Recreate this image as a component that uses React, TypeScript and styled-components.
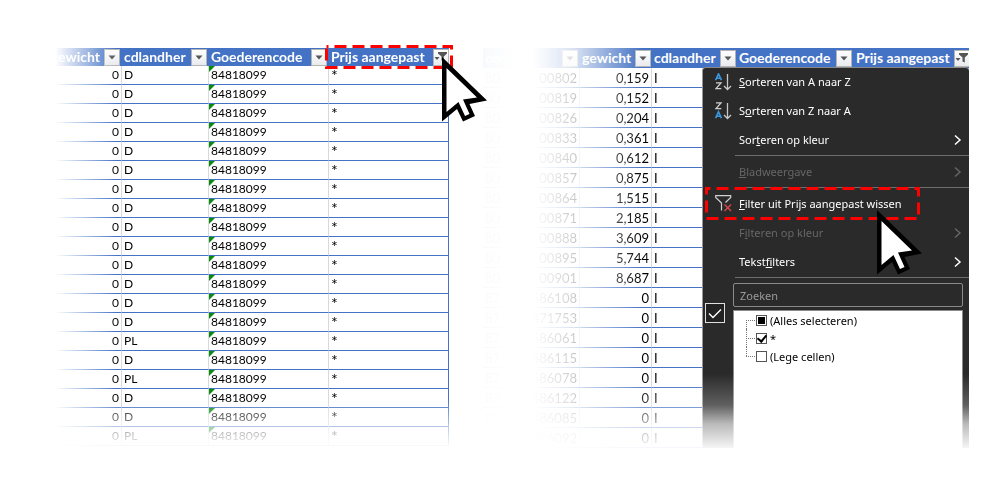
import React from "react";
import styled, { createGlobalStyle, css } from "styled-components";

const Global = createGlobalStyle`
  * { box-sizing: border-box; }
  body { margin: 0; background: #fff; font-family: Lato, "Liberation Sans", sans-serif; }
`;

const blue = "#4472c4";

const Page = styled.main`
  display: grid;
  grid-template-columns: 394fr 486fr;
  column-gap: 34px;
  align-items: start;
  padding: 48px 31px 24px 55px;
`;

const Panel = styled.section`
  position: relative;
`;

const Fade = styled.div<{ $side: string; $bottom: string }>`
  mask-image: linear-gradient(to right, ${(p) => p.$side}), linear-gradient(to bottom, ${(p) => p.$bottom});
  mask-composite: intersect;
`;

const BottomFade = styled.div<{ $bottom: string }>`
  mask-image: linear-gradient(to bottom, ${(p) => p.$bottom});
`;

const Sheet = styled.table<{ $row: number; $size: number }>`
  width: 100%;
  table-layout: fixed;
  border-collapse: separate;
  border-spacing: 0;
  font-size: ${(p) => p.$size}px;
  line-height: 16px;
  color: #000;

  tr {
    height: ${(p) => p.$row}px;
  }
  thead tr {
    height: ${(p) => p.$row - (p.$row === 19 ? 1 : 0)}px;
  }
`;

const Col = styled.col<{ $width?: number }>`
  width: ${(p) => (p.$width ? `${p.$width}px` : "auto")};
`;

const Head = styled.th<{ $active?: boolean }>`
  padding: 0 ${(p) => (p.$active ? 0 : 2)}px 0 2px;
  background: ${blue};
  color: #fff;
  font-size: 14px;
  font-weight: 700;
  text-align: left;
  white-space: nowrap;
`;

const HeadInner = styled.div<{ $end?: boolean }>`
  display: flex;
  align-items: center;
  justify-content: ${(p) => (p.$end ? "flex-end" : "space-between")};
  gap: 4px;
`;

const FilterButton = styled.button`
  display: flex;
  align-items: center;
  justify-content: center;
  flex: none;
  width: 16px;
  height: 17px;
  padding: 0;
  border: 1px solid #b4b4b4;
  background: linear-gradient(#fff, #e8eaee);
`;

const Cell = styled.td<{ $align?: "right"; $last?: boolean }>`
  position: relative;
  padding: 0 2px;
  border-bottom: 1px solid ${blue};
  border-right: 1px solid ${(p) => (p.$last ? blue : "#d6d9de")};
  text-align: ${(p) => p.$align ?? "left"};
  white-space: nowrap;
`;

const Star = styled.span`
  display: block;
  font-size: 16px;
  line-height: 18px;
`;

const Flag = styled.span`
  position: absolute;
  top: 0;
  left: 0;
  border-top: 6px solid #0b8a0b;
  border-right: 6px solid transparent;
`;

const Split = styled.span`
  display: flex;
  justify-content: space-between;
`;

const Faint = styled.span`
  opacity: 0.6;
`;

const Overlay = styled.div<{ $top: number; $right: number }>`
  position: absolute;
  top: ${(p) => p.$top}px;
  right: ${(p) => p.$right}px;
  line-height: 0;
  pointer-events: none;
`;

const Menu = styled.div`
  position: absolute;
  top: 19px;
  right: 0;
  width: 267px;
  border-left: 1px solid #969696;
  border-top: 1px solid #8a8a8a;
  border-radius: 4px 4px 0 0;
  background: #2a2a2a;
  font-family: "Noto Sans", "Open Sans", sans-serif;
  font-size: 11px;
`;

const Item = styled.button`
  display: grid;
  grid-template-columns: 36px 1fr 16px;
  align-items: center;
  width: 100%;
  height: 29px;
  padding: 0 0 2px;
  border: 0;
  background: none;
  color: #fff;
  font: inherit;
  text-align: left;
  white-space: nowrap;

  &:disabled {
    color: #666;
  }
`;

const IconSlot = styled.span`
  display: flex;
  justify-content: flex-end;
  padding-right: 7px;
`;

const Rule = styled.hr`
  height: 1px;
  margin: 0 0 2px 32px;
  border: 0;
  background: #6e6e6e;
`;

const FilterBody = styled.div`
  display: grid;
  grid-template-columns: 30px 1fr;
  padding: 3px 6px 0 0;
`;

const Gutter = styled.div`
  padding: 20px 0 0 2px;
`;

const CheckFrame = styled.div`
  display: flex;
  align-items: center;
  justify-content: center;
  width: 20px;
  height: 20px;
  border: 1px solid #e0e0e0;
  background: #222;
`;

const Search = styled.input`
  display: block;
  width: 100%;
  height: 24px;
  padding: 0 6px;
  border: 1px solid #8a8a8a;
  border-radius: 2px;
  background: #2a2a2a;
  color: #fff;
  font: inherit;

  &::placeholder {
    color: #9a9a9a;
    opacity: 1;
  }
`;

const Options = styled.div`
  height: 152px;
  margin-top: 3px;
  padding-left: 12px;
  border: 1px solid #8a8a8a;
  border-bottom: 0;
  background: #fff;
`;

const Option = styled.label<{ $first?: boolean; $last?: boolean }>`
  position: relative;
  display: flex;
  align-items: center;
  gap: 3px;
  height: 18px;
  padding-left: 10px;
  color: #000;
  white-space: nowrap;

  &::before {
    content: "";
    position: absolute;
    left: 0;
    top: ${(p) => (p.$first ? "9px" : "0")};
    height: ${(p) => (p.$first || p.$last ? "9px" : "18px")};
    border-left: 1px dotted #777;
  }
  &::after {
    content: "";
    position: absolute;
    left: 0;
    top: 9px;
    width: 9px;
    border-top: 1px dotted #777;
  }
`;

const mark = css`
  content: "";
  display: block;
`;

const Box = styled.input<{ $partial?: boolean }>`
  appearance: none;
  display: flex;
  align-items: center;
  justify-content: center;
  width: 11px;
  height: 11px;
  margin: 0;
  border: 1px solid #555;
  background: #fff;

  &:checked::after {
    ${mark}
    ${(p) =>
      p.$partial
        ? css`
            width: 7px;
            height: 7px;
            background: #000;
          `
        : css`
            width: 4px;
            height: 7px;
            margin-bottom: 2px;
            border: solid #000;
            border-width: 0 2px 2px 0;
            transform: rotate(40deg);
          `}
  }
`;

const Arrow = () => (
  <svg width="8" height="5" viewBox="0 0 8 5" aria-hidden="true">
    <path d="M0.5 0.5h7L4 4.5z" fill="#555" />
  </svg>
);

const ActiveFilter = () => (
  <svg width="14" height="12" viewBox="0 0 14 12" aria-hidden="true">
    <path d="M4 1h9v1.500L9.800 5.500V10.500L7.500 9.500V5.500L4 2.500z" fill="#555" />
    <path d="M0.500 6h5L3 9z" fill="#555" />
  </svg>
);

const Chevron = () => (
  <svg width="9" height="12" viewBox="0 0 9 12" fill="none" stroke="currentColor" strokeWidth="1.5" aria-hidden="true">
    <path d="M2 1.500l5 4.500-5 4.500" />
  </svg>
);

const SortIcon = ({ reverse }: { reverse?: boolean }) => {
  const a = <path d="M0.600 7.200L3.500 0.800 6.400 7.200M1.500 5.200h4" stroke="#3a96dd" strokeWidth="1.600" />;
  const z = <path d="M1 0.800h5L1 6.600h5.300" stroke="#d0d0d0" strokeWidth="1.300" />;
  return (
    <svg width="17" height="18" viewBox="0 0 17 18" fill="none" aria-hidden="true">
      <g>{reverse ? z : a}</g>
      <g transform="translate(0 9)">{reverse ? a : z}</g>
      <path d="M12.500 1v15.500M9 13l3.500 3.500L16 13" stroke="#c8c8c8" strokeWidth="1.300" />
    </svg>
  );
};

const ClearFilter = () => (
  <svg width="17" height="17" viewBox="0 0 17 17" fill="none" aria-hidden="true">
    <path d="M6.500 15.500V8L0.700 2.500V0.700h15v1.800L10.500 7.500" stroke="#d0d0d0" strokeWidth="1.200" />
    <path d="M9.500 9.500l6.500 6.500M16 9.500L9.500 16" stroke="#d9484c" strokeWidth="1.400" />
  </svg>
);

const Tick = () => (
  <svg width="14" height="11" viewBox="0 0 14 11" fill="none" aria-hidden="true">
    <path d="M1 5.500l4 4L13 1.500" stroke="#fff" strokeWidth="1.400" />
  </svg>
);

const Pointer = () => (
  <svg width="46" height="65" viewBox="0 0 46 65" aria-hidden="true">
    <path d="M0 0V64.500L15 52L21 64.500L33 59L27.500 47L45 43.500Z" fill="#000" />
    <path d="M4.500 11V55L16.500 45L23 59L27.500 57L21 42.500L35 40.500Z" fill="#fff" />
  </svg>
);

const Dashes = ({ width, height, offset }: { width: number; height: number; offset: number }) => (
  <svg width={width} height={height} aria-hidden="true">
    <rect
      x="1.500"
      y="1.500"
      width={width - 3}
      height={height - 3}
      fill="none"
      stroke="#f00"
      strokeWidth="3"
      strokeDasharray="12 6"
      strokeDashoffset={offset}
    />
  </svg>
);

const HeadCell = ({ text, active, end }: { text: string; active?: boolean; end?: boolean }) => (
  <Head scope="col" $active={active}>
    <HeadInner $end={end}>
      {text}
      <FilterButton type="button" aria-label={`Filter ${text}`}>
        {active ? <ActiveFilter /> : <Arrow />}
      </FilterButton>
    </HeadInner>
  </Head>
);

const countries = "D D D D D D D D D D D D D D PL D PL D D PL".split(" ");

const weights: [string, string, string][] = [
  ["80", "00802", "0,159"],
  ["80", "00819", "0,152"],
  ["80", "00826", "0,204"],
  ["80", "00833", "0,361"],
  ["80", "00840", "0,612"],
  ["80", "00857", "0,875"],
  ["80", "00864", "1,515"],
  ["80", "00871", "2,185"],
  ["80", "00888", "3,609"],
  ["80", "00895", "5,744"],
  ["80", "00901", "8,687"],
  ["87", "486108", "0"],
  ["87", "471753", "0"],
  ["87", "486061", "0"],
  ["87", "486115", "0"],
  ["87", "486078", "0"],
  ["87", "486122", "0"],
  ["87", "486085", "0"],
  ["87", "486092", "0"],
];

const leftSide = "transparent, rgba(0,0,0,0.5) 32px, #000 62px";
const leftBottom =
  "#000 351px, rgba(0,0,0,0.6) 369px, rgba(0,0,0,0.38) 379px, rgba(0,0,0,0.22) 388px, rgba(0,0,0,0.04) 398px, transparent 408px";
const rightSide =
  "rgba(0,0,0,0.04), rgba(0,0,0,0.02) 16px, transparent 30px, transparent 50px, rgba(0,0,0,0.2) 90px, rgba(0,0,0,0.4) 108px, #000 160px";
const rightBottom =
  "#000 326px, rgba(0,0,0,0.75) 357px, rgba(0,0,0,0.32) 376px, rgba(0,0,0,0.06) 399px, transparent 412px";

export default function App() {
  return (
    <>
      <Global />
      <Page>
        <Panel>
          <Fade $side={leftSide} $bottom={leftBottom}>
            <Sheet $row={19} $size={12}>
              <colgroup>
                <Col />
                <Col $width={87} />
                <Col $width={120} />
                <Col $width={120} />
              </colgroup>
              <thead>
                <tr>
                  <HeadCell text="gewicht" end />
                  <HeadCell text="cdlandher" />
                  <HeadCell text="Goederencode" />
                  <HeadCell text="Prijs aangepast" active />
                </tr>
              </thead>
              <tbody>
                {countries.map((country, i) => (
                  <tr key={i}>
                    <Cell $align="right">0</Cell>
                    <Cell>{country}</Cell>
                    <Cell>
                      <Flag />
                      84818099
                    </Cell>
                    <Cell $last>
                      <Star>*</Star>
                    </Cell>
                  </tr>
                ))}
              </tbody>
            </Sheet>
          </Fade>
          <Overlay $top={-3} $right={-4}>
            <Dashes width={128} height={24} offset={10} />
          </Overlay>
          <Overlay $top={9} $right={-39}>
            <Pointer />
          </Overlay>
        </Panel>

        <Panel>
          <BottomFade $bottom={rightBottom}>
            <Fade $side={rightSide} $bottom="#000, #000">
              <Sheet $row={20} $size={13}>
                <colgroup>
                  <Col />
                  <Col $width={72} />
                  <Col $width={85} />
                  <Col $width={117} />
                  <Col $width={115} />
                </colgroup>
                <thead>
                  <tr>
                    <HeadCell text="code" />
                    <HeadCell text="gewicht" />
                    <HeadCell text="cdlandher" />
                    <HeadCell text="Goederencode" />
                    <HeadCell text="Prijs aangepast" active />
                  </tr>
                </thead>
                <tbody>
                  {weights.map(([start, rest, weight], i) => (
                    <tr key={i}>
                      <Cell>
                        <Split>
                          <Faint>{start}</Faint>
                          <span>{rest}</span>
                        </Split>
                      </Cell>
                      <Cell $align="right">{weight}</Cell>
                      <Cell>I</Cell>
                      <Cell />
                      <Cell />
                    </tr>
                  ))}
                </tbody>
              </Sheet>
            </Fade>
            <Menu>
              <Item type="button">
                <IconSlot><SortIcon /></IconSlot>
                <span><u>S</u>orteren van A naar Z</span>
              </Item>
              <Item type="button">
                <IconSlot><SortIcon reverse /></IconSlot>
                <span>S<u>o</u>rteren van Z naar A</span>
              </Item>
              <Item type="button">
                <IconSlot />
                <span>Sor<u>t</u>eren op kleur</span>
                <Chevron />
              </Item>
              <Rule />
              <Item type="button" disabled>
                <IconSlot />
                <span><u>B</u>ladweergave</span>
                <Chevron />
              </Item>
              <Rule />
              <Item type="button">
                <IconSlot><ClearFilter /></IconSlot>
                <span><u>F</u>ilter uit Prijs aangepast wissen</span>
              </Item>
              <Item type="button" disabled>
                <IconSlot />
                <span>F<u>i</u>lteren op kleur</span>
                <Chevron />
              </Item>
              <Item type="button">
                <IconSlot />
                <span>Tekst<u>f</u>ilters</span>
                <Chevron />
              </Item>
              <Rule />
              <FilterBody>
                <Gutter>
                  <CheckFrame><Tick /></CheckFrame>
                </Gutter>
                <div>
                  <Search type="text" placeholder="Zoeken" aria-label="Zoeken" />
                  <Options>
                    <Option $first>
                      <Box type="checkbox" $partial defaultChecked />
                      (Alles selecteren)
                    </Option>
                    <Option>
                      <Box type="checkbox" defaultChecked />*
                    </Option>
                    <Option $last>
                      <Box type="checkbox" />
                      (Lege cellen)
                    </Option>
                  </Options>
                </div>
              </FilterBody>
            </Menu>
          </BottomFade>
          <Overlay $top={139} $right={49}>
            <Dashes width={215} height={33} offset={8} />
          </Overlay>
          <Overlay $top={162} $right={46}>
            <Pointer />
          </Overlay>
        </Panel>
      </Page>
    </>
  );
}
